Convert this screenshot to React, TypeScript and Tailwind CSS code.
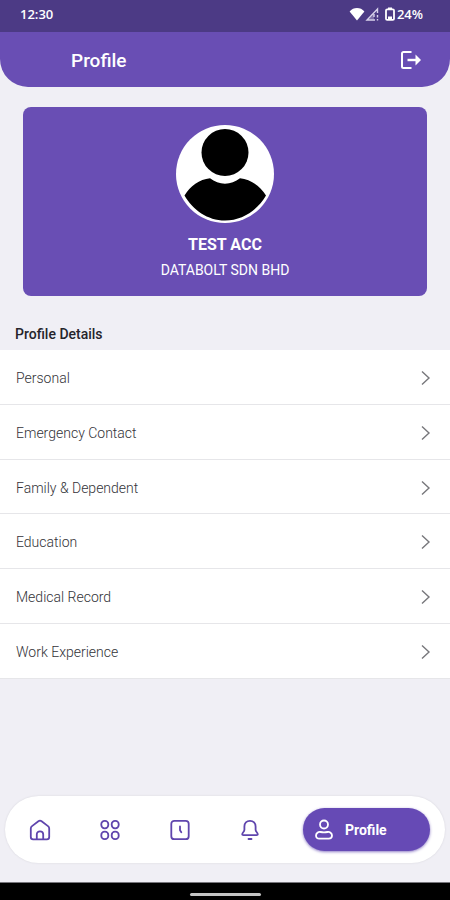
import type { ReactNode } from 'react';

const details = [
  'Personal',
  'Emergency Contact',
  'Family & Dependent',
  'Education',
  'Medical Record',
  'Work Experience',
];

function StatusBar() {
  return (
    <div className="flex h-8 items-center justify-between bg-[#4c3a85] pr-[27px] pl-5 font-['Open_Sans','Noto_Sans',sans-serif] text-[13px] leading-4 font-semibold text-white">
      <span className="pb-1">12:30</span>
      <div className="flex items-center pb-1">
        <svg width="16" height="14" viewBox="0 0 16 14" fill="currentColor" aria-hidden="true">
          <path d="M8 13.5 0.6 4.4C2.6 2.2 5.2 1 8 1s5.4 1.2 7.4 3.4z" />
        </svg>
        <svg width="15" height="14" viewBox="0 0 15 14" fill="none" stroke="#d9d3ec" strokeWidth="1.4" aria-hidden="true">
          <path d="M10 13H2L12.500 2V6" />
          <path d="M3.500 12.500 9 6.500V12.500z" fill="#d9d3ec" fillOpacity="0.35" stroke="none" />
          <path d="M9 7v3M12.500 8v2.500M12.500 12v1.500" />
        </svg>
        <svg className="ml-1" width="12" height="14" viewBox="0 0 12 14" aria-hidden="true">
          <rect x="2" y="2.3" width="8" height="10.6" rx="1.2" fill="none" stroke="currentColor" strokeWidth="1.8" />
          <path d="M4 0.5h4v2H4zM4 9.5h4V12H4z" fill="currentColor" />
        </svg>
        <span className="ml-px">24%</span>
      </div>
    </div>
  );
}

function Header() {
  return (
    <header className="flex h-[55px] items-center justify-between rounded-b-[28px] bg-[#694eb4] pr-[27px] pl-[71px] text-white">
      <h1 className="pt-0.5 text-[19px] leading-6 font-medium">Profile</h1>
      <button type="button" aria-label="Log out">
        <svg width="24" height="22" viewBox="0 0 24 22" fill="none" stroke="currentColor" strokeWidth="2" aria-hidden="true">
          <path d="M12.500 3H4.500A1.500 1.500 0 0 0 3 4.500v13A1.500 1.500 0 0 0 4.500 19H12.500" />
          <path d="M8.500 11h9.500" strokeWidth="2.400" />
          <path d="m16.500 5.500 5.500 5.500-5.500 5.500z" fill="currentColor" stroke="none" />
        </svg>
      </button>
    </header>
  );
}

function Avatar() {
  return (
    <svg width="98" height="98" viewBox="0 0 98 98" role="img" aria-label="Profile photo">
      <circle cx="49" cy="49" r="49" fill="#fff" />
      <circle cx="49" cy="27.500" r="23.500" />
      <path d="M34 53.200C38.500 56.500 43.500 58.700 49 58.700s10.500-2.200 15-5.500c10.500 1 20.500 8 26 17.300C81.500 85 66.500 95.500 49 95.500S17 85 8.500 70.500C14 61.200 23.500 54.200 34 53.200z" />
    </svg>
  );
}

function NavIcon({ children }: { children: ReactNode }) {
  return (
    <svg width="24" height="24" viewBox="0 0 24 24" fill="none" stroke="currentColor" strokeWidth="1.8" strokeLinecap="round" strokeLinejoin="round" aria-hidden="true">
      {children}
    </svg>
  );
}

function BottomNav() {
  return (
    <nav className="mx-[5px] mb-[19px] flex h-[67px] items-center gap-[41px] rounded-full bg-white pr-[15px] pl-[23px] text-[#5f45ad] shadow-[0_0_2px_#d4d3da]">
      <div className="flex flex-1 items-center justify-between">
        <button type="button" aria-label="Home">
          <NavIcon>
            <path d="M2.800 10.500c0-1 .4-1.800 1.200-2.400l6.400-4.900c1-.8 2.200-.8 3.200 0L20 8.100c.8.600 1.200 1.400 1.200 2.400V19c0 1.300-1 2.300-2.300 2.300H5.100c-1.300 0-2.300-1-2.300-2.300z" />
            <path d="M8.800 21v-4.800c0-1.700 1.300-2.900 3.200-2.900s3.200 1.200 3.200 2.900V21" />
          </NavIcon>
        </button>
        <button type="button" aria-label="Modules">
          <NavIcon>
            <rect x="3.300" y="2.800" width="7" height="7.600" rx="3.300" />
            <rect x="13.700" y="2.800" width="7" height="7.600" rx="3.300" />
            <rect x="3.300" y="13.600" width="7" height="7.600" rx="3.300" />
            <rect x="13.700" y="13.600" width="7" height="7.600" rx="3.300" />
          </NavIcon>
        </button>
        <button type="button" aria-label="Attendance">
          <NavIcon>
            <rect x="3.300" y="2.800" width="17.400" height="18.400" rx="3" />
            <path d="M12 8.500v3.700l1.300 2" />
          </NavIcon>
        </button>
        <button type="button" aria-label="Notifications">
          <NavIcon>
            <path d="M12 2.800c-3.400 0-5.600 2.400-5.600 5.700v3.300c0 .8-.4 1.500-1 2.200-1.500 1.700-1.600 3.200 0 3.200h13.200c1.600 0 1.500-1.500 0-3.200-.6-.7-1-1.400-1-2.200V8.500c0-3.300-2.200-5.700-5.600-5.700z" />
            <path d="M10.500 21h3" />
          </NavIcon>
        </button>
      </div>
      <button type="button" aria-current="page" className="flex h-[43px] w-[127px] items-center gap-[9px] rounded-full bg-[#664ab5] pl-[9px] text-white shadow-[0_1px_3px_#8d7bc6]">
        <NavIcon>
          <circle cx="12" cy="6.500" r="4" />
          <path d="M4 17.600c0-2.500 2.300-4.100 4.600-3.600 2.200.5 4.600.5 6.800 0 2.300-.5 4.600 1.100 4.600 3.600 0 2.100-1.300 3.100-3.300 3.100H7.300c-2 0-3.300-1-3.300-3.100z" />
        </NavIcon>
        <span className="text-sm font-bold">Profile</span>
      </button>
    </nav>
  );
}

export default function App() {
  return (
    <div className="flex min-h-screen flex-col bg-[#f0eff5] font-[Roboto,sans-serif]">
      <StatusBar />
      <Header />
      <main>
        <section className="mx-[23px] mt-5 flex flex-col items-center rounded-lg bg-[#694eb4] pt-[18px] pb-4 text-white">
          <Avatar />
          <h2 className="mt-3 text-base leading-5 font-bold">TEST ACC</h2>
          <p className="mt-[5px] text-sm leading-5">DATABOLT SDN BHD</p>
        </section>
        <h3 className="mt-7 px-[15px] text-sm leading-5 font-medium text-[#25242b]">Profile Details</h3>
        <ul className="mt-1.5 grid min-h-[329px] auto-rows-fr bg-white text-sm font-light text-[#333338]">
          {details.map((label) => (
            <li key={label} className="flex border-b border-[#e6e6e9]">
              <button type="button" className="flex flex-1 items-center justify-between pt-0.5 pr-[18px] pl-4 text-left">
                {label}
                <svg width="12" height="16" viewBox="0 0 12 16" fill="none" stroke="#77777b" strokeWidth="1.400" aria-hidden="true">
                  <path d="m2 1.500 7 6.500-7 6.500" />
                </svg>
              </button>
            </li>
          ))}
        </ul>
      </main>
      <div className="mt-auto">
        <BottomNav />
        <div className="flex h-[18px] items-center justify-center border-t border-[#77767c] bg-black pt-[5px]">
          <div className="h-[3px] w-[71px] rounded-full bg-[#c4c4c4]" />
        </div>
      </div>
    </div>
  );
}
